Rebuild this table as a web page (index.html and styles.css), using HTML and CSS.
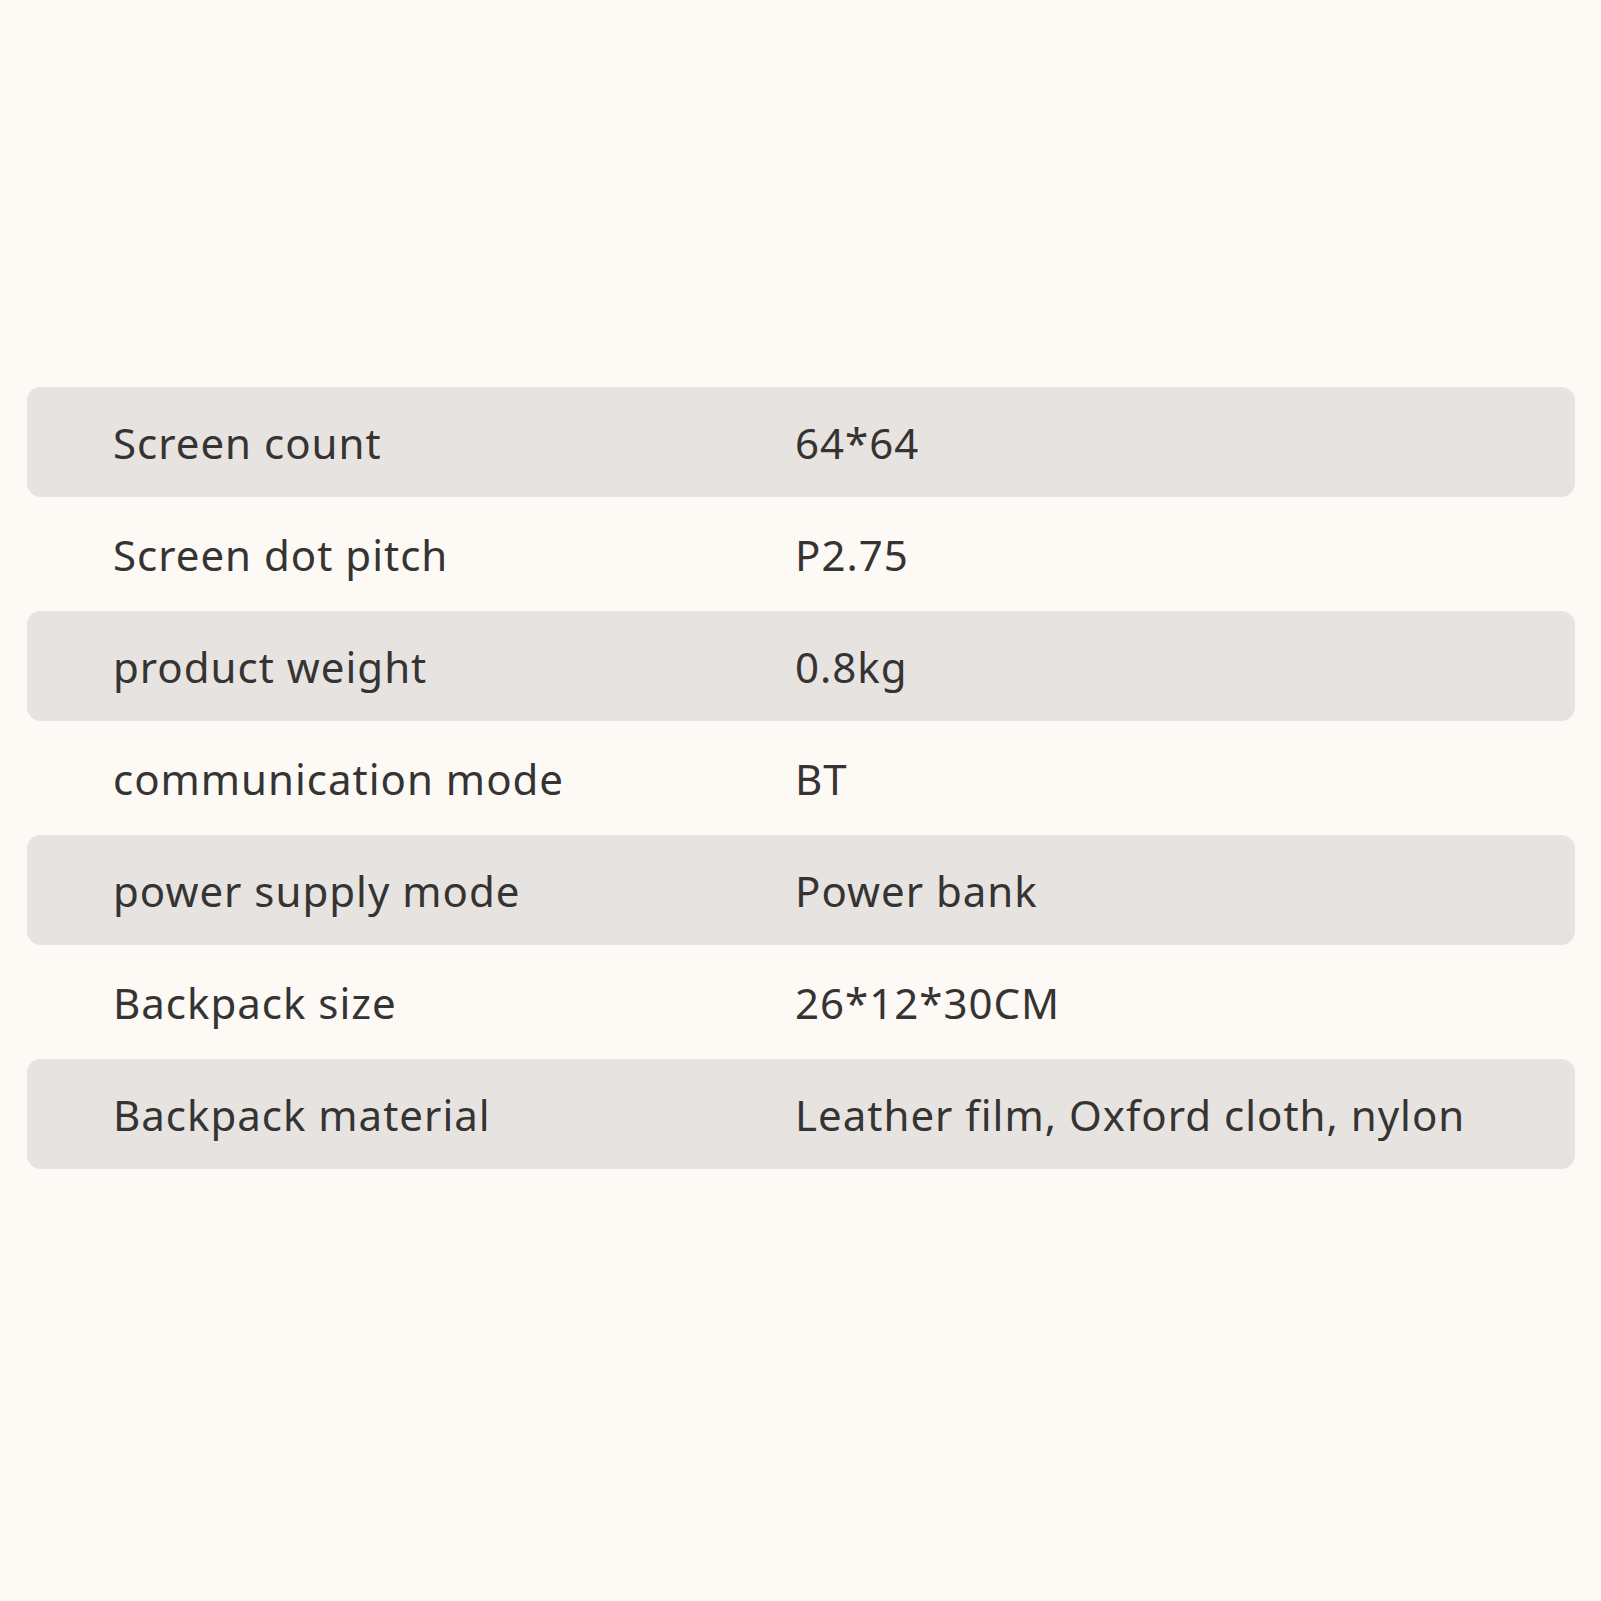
FILE: index.html
```html
<!DOCTYPE html>
<html>
<head>
<meta charset="utf-8">
<link rel="stylesheet" href="styles.css">
</head>
<body>
<div class="table">
  <div class="row shaded"><div class="label">Screen count</div><div class="value">64*64</div></div>
  <div class="row"><div class="label">Screen dot pitch</div><div class="value">P2.75</div></div>
  <div class="row shaded"><div class="label">product weight</div><div class="value">0.8kg</div></div>
  <div class="row"><div class="label">communication mode</div><div class="value">BT</div></div>
  <div class="row shaded"><div class="label">power supply mode</div><div class="value">Power bank</div></div>
  <div class="row"><div class="label">Backpack size</div><div class="value">26*12*30CM</div></div>
  <div class="row shaded"><div class="label">Backpack material</div><div class="value">Leather film, Oxford cloth, nylon</div></div>
</div>
</body>
</html>
```
FILE: styles.css
```css
html, body {
  margin: 0;
  padding: 0;
  background: #fdf9f5;
}
body {
  width: 1601px;
  height: 1601px;
  font-family: "Noto Sans", "Open Sans", sans-serif;
  color: #353433;
}
.table {
  padding: 387px 26px 0 27px;
  display: flex;
  flex-direction: column;
}
.row {
  display: flex;
  align-items: center;
  height: 114px;
  padding-left: 86px;
  font-size: 42px;
  letter-spacing: 1px;
  padding-top: 1px;
  box-sizing: border-box;
}
.row.shaded {
  height: 110px;
  background: #e7e3e0;
  border-radius: 14px;
}
.label {
  width: 682px;
}
.value {
  flex: 1;
}
```
